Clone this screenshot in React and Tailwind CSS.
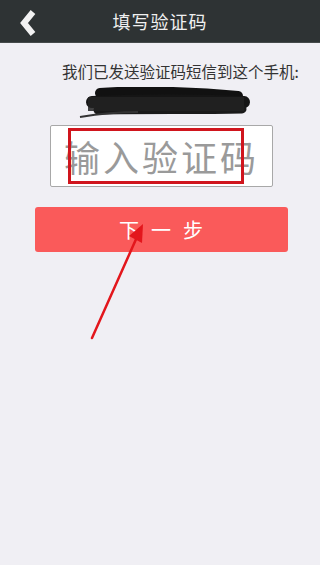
import { useState } from 'react';

const FONT = { fontFamily: '"Noto Sans CJK SC", "Noto Sans", sans-serif' };

const Header = () => (
  <div className="relative h-[43px] bg-[#2e3334] flex items-center justify-center border-b border-[#454a4b]">
    <svg className="absolute left-[19px] top-[10px]" width="18" height="26" viewBox="0 0 18 26">
      <path d="M14 2 L5 13 L14 24" fill="none" stroke="#f2f2f2" strokeWidth="6" strokeLinejoin="miter" />
    </svg>
    <span className="text-[18px] text-[#f0f0f0] tracking-[1px]">填写验证码</span>
  </div>
);

const Scribble = () => (
  <svg width="175" height="32" viewBox="0 0 175 32">
    <path d="M22 6 C60 3 120 5 160 9" stroke="#111" strokeWidth="10" fill="none" strokeLinecap="round" />
    <path d="M14 15 C60 13 120 13 166 15" stroke="#151515" strokeWidth="12" fill="none" strokeLinecap="round" />
    <path d="M20 23 C70 22 120 23 164 22" stroke="#1a1a1a" strokeWidth="9" fill="none" strokeLinecap="round" />
    <path d="M2 30 C20 27 40 25 60 25" stroke="#333" strokeWidth="2" fill="none" />
    <rect x="10" y="10" width="156" height="14" fill="#222" opacity="0.85" />
  </svg>
);

export default function App() {
  const [code, setCode] = useState('');
  return (
    <div className="w-[320px] h-[565px] bg-[#f0eff4] overflow-hidden relative" style={FONT}>
      <Header />
      <p className="mt-[18px] pl-[62px] text-[15.5px] leading-5 text-[#333]">我们已发送验证码短信到这个手机:</p>
      <div className="mt-[6px] pl-[78px] h-[32px]">
        <Scribble />
      </div>
      <div className="mt-[6px] ml-[50px] w-[223px] h-[62px] bg-white border border-[#a8a8a8] rounded-[2px] relative flex items-center">
        <input
          value={code}
          onChange={(e) => setCode(e.target.value)}
          placeholder="输入验证码"
          className="w-full h-full bg-transparent outline-none pl-[13px] text-[36px] tracking-[3px] text-[#666] placeholder:text-[#9a9a9a]"
        />
        <div className="absolute left-[17px] top-[2px] w-[176px] h-[56px] border-[3px] border-[#d0151d] pointer-events-none" />
      </div>
      <button className="mt-[20px] ml-[35px] w-[253px] h-[45px] rounded-[3px] bg-[#fa5a5a] text-white text-[20px] tracking-[1px]">
        下&nbsp;&nbsp;一&nbsp;&nbsp;步
      </button>
      <svg className="absolute left-0 top-0 pointer-events-none" width="320" height="565">
        <line x1="92" y1="338" x2="137" y2="237" stroke="#e3161c" strokeWidth="2.5" strokeLinecap="round" />
        <polygon points="143,224 142,243 129,236" fill="#e3161c" />
      </svg>
    </div>
  );
}
